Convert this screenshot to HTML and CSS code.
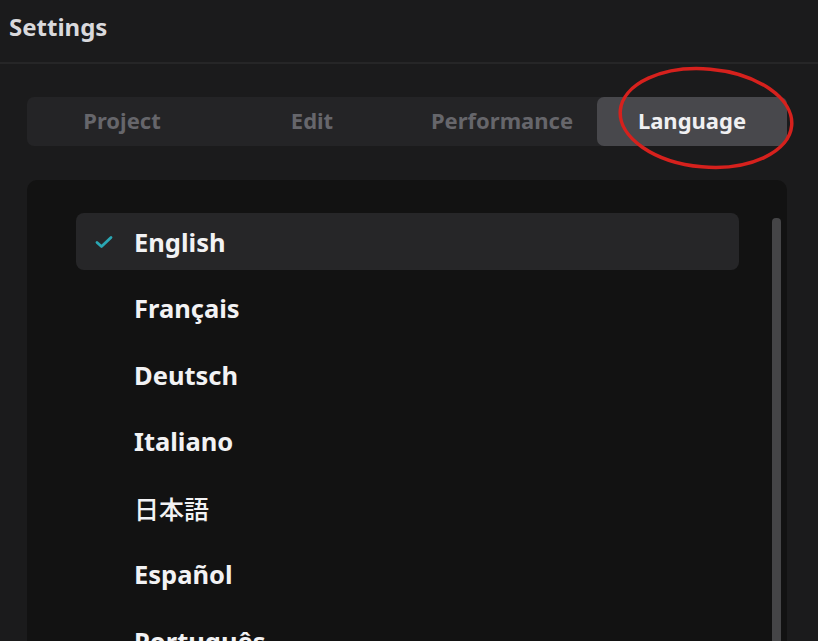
FILE: index.html
```html
<!DOCTYPE html>
<html lang="en">
<head>
    <meta charset="UTF-8">
    <title>Settings</title>
    <link rel="stylesheet" href="styles.css">
</head>
<body>

<div class="header">Settings</div>

<div class="content">
    <!-- Tabs -->
    <div class="tabs">
        <div class="tab">Project</div>
        <div class="tab">Edit</div>
        <div class="tab">Performance</div>
        <div class="tab active">Language</div>
    </div>

    <!-- Language list -->
    <div class="panel">
        <div class="list">
            <div class="item selected">
                <svg class="check" width="18" height="14" viewBox="0 0 18 14"><path d="M2 7.5 L6.5 11.5 L16 2.5" fill="none" stroke="#2aa7b4" stroke-width="2.8" stroke-linecap="round" stroke-linejoin="round"/></svg>
                English
            </div>
            <div class="item">Français</div>
            <div class="item">Deutsch</div>
            <div class="item">Italiano</div>
            <div class="item cjk">日本語</div>
            <div class="item">Español</div>
            <div class="item">Português</div>
        </div>
        <div class="scrollbar"></div>
    </div>
</div>

<!-- red marker round the active tab -->
<svg class="marker" width="200" height="120" viewBox="0 0 200 120">
    <ellipse cx="100" cy="60" rx="86" ry="49" fill="none" stroke="#d6211d" stroke-width="3.5" transform="rotate(5 100 60)"/>
</svg>

</body>
</html>
```

FILE: styles.css
```css
body {
    margin: 0;
    background-color: #1b1b1c;
    font-family: "Noto Sans", "Noto Sans CJK JP", sans-serif;
    overflow: hidden;
    height: 641px;
    position: relative;
}
.header {
    height: 62px;
    line-height: 54px;
    padding-left: 9px;
    font-size: 24px;
    font-weight: 700;
    color: #d9d9dc;
    border-bottom: 2px solid #262627;
}
.content {
    padding: 33px 31px 0 27px;
}
.tabs {
    display: flex;
    height: 49px;
    background-color: #242426;
    border-radius: 7px;
}
.tab {
    flex: 1;
    display: flex;
    align-items: center;
    justify-content: center;
    padding-bottom: 3px;
    font-size: 22px;
    font-weight: 700;
    color: #66666b;
    border-radius: 7px;
}
.tab.active {
    background-color: #48484c;
    color: #f0f0f2;
}
.panel {
    margin-top: 34px;
    height: 520px;
    background-color: #121212;
    border-radius: 10px;
    padding: 33px 0 0 49px;
    display: flex;
    position: relative;
}
.list {
    width: 663px;
}
.item {
    display: flex;
    align-items: center;
    height: 57px;
    margin-bottom: 9.5px;
    padding-left: 58px;
    position: relative;
    font-size: 25.5px;
    font-weight: 700;
    color: #f2f2f4;
    border-radius: 8px;
}
.item.selected {
    background-color: #262628;
}
.item.cjk {
    font-size: 25px;
    font-weight: 500;
}
.check {
    position: absolute;
    left: 19px;
    top: 22px;
}
.scrollbar {
    margin-left: 33px;
    margin-top: 5px;
    width: 9px;
    height: 460px;
    background-color: #454547;
    border-radius: 4px;
}
.marker {
    position: absolute;
    left: 606px;
    top: 58px;
}
```
